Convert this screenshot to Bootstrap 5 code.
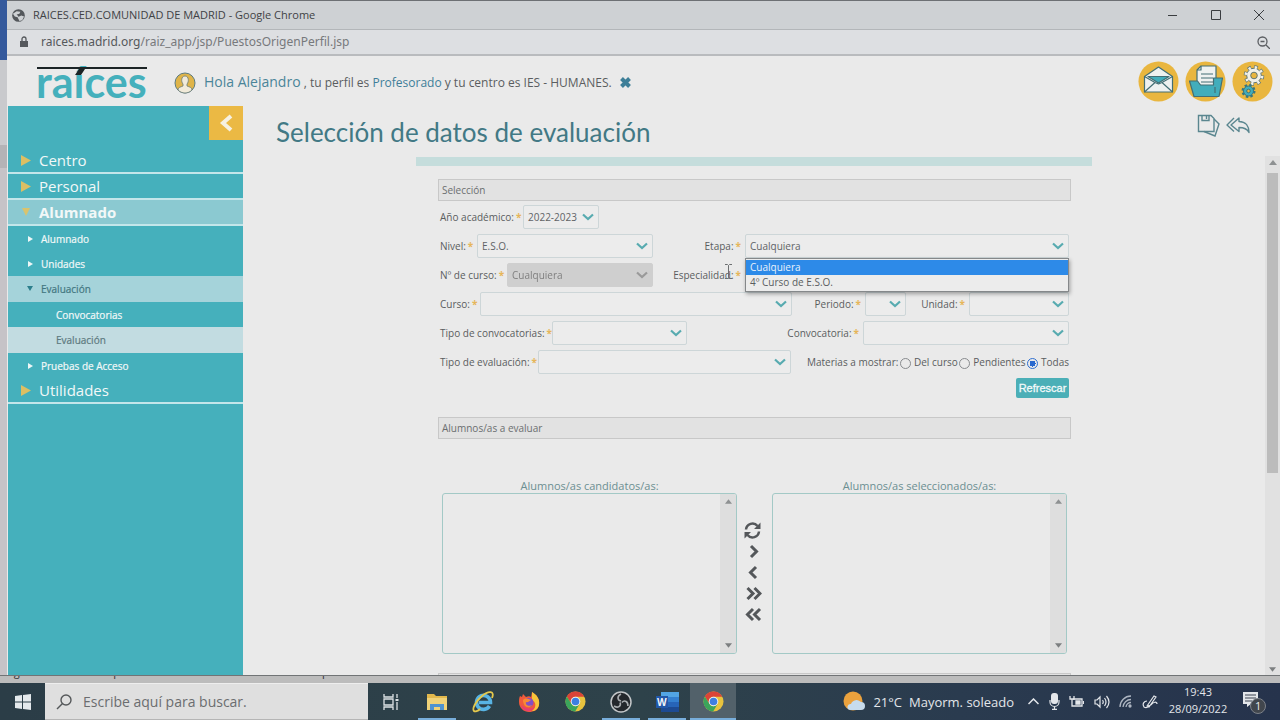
<!DOCTYPE html>
<html lang="es">
<head>
<meta charset="utf-8">
<meta name="viewport" content="width=device-width, initial-scale=1">
<title>RAICES.CED.COMUNIDAD DE MADRID</title>
<link rel="stylesheet" href="https://cdn.jsdelivr.net/npm/bootstrap@5.3.0/dist/css/bootstrap.min.css">
<style>
:root{--teal:#45b0bc;--amber:#ebb944;--ink:#5a5d60}
body{font-family:"Open Sans","Noto Sans",sans-serif;font-size:11px;line-height:16px;color:var(--ink);background:#c3c4c6;overflow:hidden}
svg{display:block;flex:none}
a{text-decoration:none}
.fit-h{min-height:0}
.fit-w{min-width:0}
.behind{width:7px;background:linear-gradient(#34599c 60px,#c9cacd 60px 145px,#b4b3b6 145px 168px,#c6c3c7 168px)}
.win{border-top:1px solid #6d7074;background:#eaeaea;min-width:0}
.win-title{height:29px;background:#ced1d4;border-bottom:1px solid #b3b6b9;padding:0 16px 0 5px;font-size:11px;color:#3f4245}
.win-url{height:26px;background:#dddfe2;border-bottom:2px solid #b9bbbe;padding:0 10px 0 12px;font:12px/16px "Noto Sans",sans-serif;color:#77797c}
.win-url b{font-weight:400;color:#55585b}
.win-btn{border:0;background:none;padding:0}
.win-btns{gap:33px}
.top{height:50px;padding:0 7px 0 29px}
.logo{font:700 43px/46px Lato,sans-serif;color:var(--teal);width:112px;margin-top:2px}
.logo svg{top:8px;left:1px}
.user-icon{margin-left:26px}
.tools{gap:6px}
.hello{font-size:12px;color:var(--ink);padding-top:2px}
.hello a{color:#3e7e99}
.hello .who{font-size:14px;color:#4a8599}
.side{width:235px;margin-left:1px;background:var(--teal)}
.fold{width:34px;height:34px;background:var(--amber);border:0;padding:0}
.menu{margin-top:8px}
.menu a{display:flex;align-items:center;color:#f2f8f8}
.m1{height:26px;font-size:15px;border-bottom:2px solid #c3e6ea;padding-left:13px;gap:8px}
.m1.open{background:#8bc9d1;font-weight:700}
.m2,.m3{height:25px;font-size:10px;-webkit-text-stroke:.2px}
.m2{padding-left:17px;gap:8px}
.m3{padding-left:48px}
.m2.open,.m3.open{height:26px}
.menu .m2.open{background:#a5d3da;color:#42767f}
.menu .m3.open{background:#c2dce1;color:#5d7a80}
.head-row{height:50px;padding:6px 30px 0 33px}
.head-row h1{font:400 26px/40px Lato,sans-serif;color:#427985}
.acts{gap:6px;padding-top:2px}
.panel{width:676px;max-width:100%;padding:13px 21px 0 22px}
.stripe{width:676px;max-width:100%;height:9px;margin-top:1px;background:#c5dddc}
.sec{height:22px;margin:0;background:#e2e2e2;border:1px solid #c8c8c8;font-size:10px;line-height:20px;font-weight:400;padding:0 3px;color:#6b6e70}
.frow{display:grid;align-items:center;height:29px;margin:0 2px}
.r1{grid-template-columns:83px 76px;margin-top:1px}
.r2{grid-template-columns:37px 176fr 92px 324fr}
.r3{grid-template-columns:67px 146fr 92px 324fr}
.r4{grid-template-columns:40px 312fr 73px 41fr 63px 100fr}
.r5{grid-template-columns:112px 135fr 176px 206fr}
.r6{grid-template-columns:98px 253fr 278fr}
.frow label,.frow .lbl{font-size:10px;white-space:nowrap}
.req::after{content:"*";color:#e6b65a;font-weight:700;margin-left:2px}
.end{text-align:right;padding-right:4px}
.pick{appearance:none;width:100%;height:24px;border:1px solid #cdd6d8;border-radius:2px;padding:0 18px 0 4px;font-size:10px;line-height:20px;color:#606366;background:#ececec url("data:image/svg+xml,%3Csvg xmlns='http://www.w3.org/2000/svg' viewBox='0 0 12 8'%3E%3Cpath d='M1 1.500l5 4.500 5-4.500' fill='none' stroke='%2358abb0' stroke-width='2.200'/%3E%3C/svg%3E") no-repeat right 4px center/12px 8px}
.pick:disabled{background-color:#cfcfcf;border-color:#cfcfcf;color:#7d8082;opacity:1;filter:grayscale(1)}
.pop{top:24px;left:0;right:0;z-index:5;background:#ececec;border:1px solid #85888a;box-shadow:1px 2px 4px #0005;font-size:10px;line-height:15px;padding:1px 0}
.pop div{padding:0 4px}
.pop .on{background:#2d8ae8;color:#e9f2fb}
.rad{gap:3px}
.rad input{appearance:none;width:11px;height:11px;border:1px solid #888b8e;border-radius:50%;margin:4px 0 0}
.rad input:checked{border-color:#2f6fd0;background:radial-gradient(#2868cf 3px,#eaeaea 3px)}
.go-row{height:41px;padding:2px 2px 0 0}
.go{width:53px;height:20px;border:0;border-radius:2px;background:#4bafb7;color:#f3fafa;font:400 11px/18px "Liberation Sans",sans-serif;padding:0;-webkit-text-stroke:.3px}
.lists{margin:39px 4px 0 4px}
.half{flex:1 1 0;min-width:0}
.lists label{font-size:11px;line-height:15px;color:#6c8f92}
.box{height:161px;border:1px solid #a3c9c6;border-radius:3px;overflow:hidden}
.box select{flex:1;min-width:0;border:0;background:none;overflow:hidden;outline:0}
.sb{width:16px;background:#dedede;padding:5px 0}
.moves{width:35px;padding:42px 0 0 7px}
.moves button{border:0;background:none;padding:0;height:21px}
.next{margin-top:19px}
.bar-page{width:15px;background:#e1e1e1;padding:4px 0 3px}
.thumb{width:11px;height:300px;background:#bcbcbc}
.status{height:8px;background:#bcbcbc;border-top:1px solid #717476;overflow:hidden;color:#2f3133;padding-left:1px;gap:22px}
.status span{line-height:16px;margin-top:-12px}
.task{height:37px;background:linear-gradient(90deg,#2b3d47,#2e424a 50%,#2a3b4f 75%,#26334c);color:#e3e6ea}
.task button{border:0;background:none;padding:0;width:46px;height:37px;display:flex;align-items:center;justify-content:center}
.task .run{background:linear-gradient(#78aedb,#78aedb) no-repeat bottom center/38px 2px}
.task .act{background-color:#52616a;background-size:46px 2px}
.task .start{width:45px}
.task .notif{width:46px;padding-right:6px;margin-left:6px}
.find{width:323px;background:#dfdfdf;border-top:1px solid #eee;border-bottom:1px solid #b5b5b5;padding-left:11px;gap:11px}
.find input{border:0;background:none;font-size:14px;width:240px;padding:0;outline:0;color:#666}
.find input::placeholder{color:#6b6d6f;opacity:1}
.weather{font-size:13px;gap:7px}
.tray{width:130px;margin-left:14px}
.clock{font-size:11px;line-height:17px;width:60px;margin-left:10px}
.ibeam{left:308px;top:98px;z-index:4}
</style>
</head>
<body class="vh-100 d-flex flex-column">
<svg width="0" height="0" class="position-absolute"><defs>
<symbol id="chrome" viewBox="0 0 22 22"><circle cx="11" cy="11" r="10.500" fill="#e8c33e"/><path d="M1.900 5.700A10.500 10.500 0 0 1 20.200 6H11a5 5 0 0 0-4.600 7z" fill="#db4437"/><path d="M1.900 5.700A10.500 10.500 0 0 0 10.600 21.500L15.300 13.600A5 5 0 0 1 6.500 13z" fill="#3ba55b"/><circle cx="11" cy="11" r="5" fill="#eef2f5"/><circle cx="11" cy="11" r="4" fill="#3d7fe0"/></symbol>
<symbol id="up" viewBox="0 0 8 5"><path d="M0 5l4-5 4 5z" fill="#8e9192"/></symbol>
<symbol id="dn" viewBox="0 0 8 5"><path d="M0 0l4 5 4-5z" fill="#7c7f80"/></symbol>
<symbol id="tri" viewBox="0 0 10 11"><path d="M0 0l10 5.500L0 11z" fill="#dcbf63"/></symbol>
</defs></svg>

<div class="d-flex flex-grow-1 fit-h">
<div class="behind flex-shrink-0"></div>
<div class="win d-flex flex-column flex-grow-1">
  <div class="win-title d-flex align-items-center flex-shrink-0">
    <svg width="13" height="13" viewBox="0 0 14 14"><circle cx="7" cy="7" r="6.800" fill="#53575b"/><path d="M1 5l4-2.500 4 .5-1 2-3 1 2 2-1 1-3-1zM6 9l4-2 3 1-2 4-3 1z" fill="#ced1d4"/></svg>
    <span class="ms-2">RAICES.CED.COMUNIDAD DE MADRID - Google Chrome</span>
    <div class="ms-auto d-flex win-btns">
      <button class="win-btn" aria-label="Minimizar"><svg width="10" height="10"><path d="M0 5.500h9" stroke="#3a3d40"/></svg></button>
      <button class="win-btn" aria-label="Maximizar"><svg width="10" height="10"><path d="M.5.500h9v9h-9z" fill="none" stroke="#3a3d40"/></svg></button>
      <button class="win-btn" aria-label="Cerrar"><svg width="10" height="10"><path d="M0 0l10 10M10 0L0 10" stroke="#3a3d40"/></svg></button>
    </div>
  </div>
  <div class="win-url d-flex align-items-center flex-shrink-0">
    <svg width="10" height="12" viewBox="0 0 10 12"><path d="M1 5h8v6H1z" fill="#55585c"/><path d="M3 5V3a2 2 0 0 1 4 0v2" fill="none" stroke="#55585c" stroke-width="1.300"/></svg>
    <span class="ms-2 ps-1"><b>raices.madrid.org</b>/raiz_app/jsp/PuestosOrigenPerfil.jsp</span>
    <svg class="ms-auto" width="13" height="13" viewBox="0 0 13 13" fill="none" stroke="#5b5e62" stroke-width="1.300"><circle cx="5.500" cy="5.500" r="4.500"/><path d="M9 9l4 4M3.500 5.500h4"/></svg>
  </div>

  <header class="top d-flex align-items-center flex-shrink-0">
    <div class="logo position-relative">raíces<svg class="position-absolute" width="111" height="16" viewBox="0 0 111 16"><path d="M0 0h110v2H48l-4 6h-6l4-6H0z" fill="#1c2426"/></svg></div>
    <svg class="user-icon mt-1" width="22" height="22" viewBox="0 0 22 22"><circle cx="11" cy="11" r="10" fill="#dfb449" stroke="#5c7b80"/><path d="M4 18c0-3 3-3 5-4v-2C7 10 7 4 11 4s4 6 2 8v2c2 1 5 1 5 4-4 4-10 4-14 0z" fill="#f1ead9" stroke="#6b7c78" stroke-width=".8"/></svg>
    <div class="hello ms-2 d-flex align-items-center"><span><a href="#" class="who">Hola Alejandro</a> , tu perfil es <a href="#">Profesorado</a> y tu centro es IES - HUMANES.</span>
    <a href="#" class="ms-2" aria-label="Salir"><svg width="11" height="11" viewBox="0 0 11 11"><path d="M1.500 1.500l8 8M9.500 1.500l-8 8" stroke="#3e7f98" stroke-width="4"/></svg></a></div>
    <div class="ms-auto d-flex tools">
      <svg width="41" height="41" viewBox="0 0 41 41"><circle cx="20.500" cy="20.500" r="20" fill="#e9b63f"/><g stroke="#436f75" stroke-width="1.200" stroke-linejoin="round"><path d="M6.500 15.500L20.500 6l14 9.500V31h-28z" fill="#eef1f0"/><path d="M10 15.500h21L20.500 22z" fill="#42adbb"/><path d="M6.500 15.500L17 21.500l3.500 1.500 3.500-1.500 10.500-6M6.500 31L17 21.500M34.500 31L24 21.500" fill="none"/></g></svg>
      <svg width="41" height="41" viewBox="0 0 41 41"><circle cx="20.500" cy="20.500" r="20" fill="#e9b63f"/><g stroke="#436f75" stroke-width="1.200" stroke-linejoin="round"><path d="M16 5h15v25H12V9z" fill="#eef1f0"/><path d="M16 5v4h-4M16 13h12M16 17h12M16 21h12" fill="none"/><path d="M4.500 20h8l3 4h13v-7h9L34 35.500H9z" fill="#42adbb"/><path d="M30 26v6" fill="none"/></g></svg>
      <svg width="41" height="41" viewBox="0 0 41 41"><circle cx="20.500" cy="20.500" r="20" fill="#e9b63f"/><circle cx="22" cy="14.500" r="8" fill="none" stroke="#5f7777" stroke-width="4.500" stroke-dasharray="3.280 3"/><circle cx="22" cy="14.500" r="7.300" fill="#f1f0e8" stroke="#5f7777"/><circle cx="22" cy="14.500" r="8" fill="none" stroke="#f1f0e8" stroke-width="3" stroke-dasharray="2.280 4" stroke-dashoffset="-.5"/><circle cx="22" cy="14.500" r="3.300" fill="#e9b63f" stroke="#5f7777"/><circle cx="16.500" cy="30" r="5.500" fill="none" stroke="#37767e" stroke-width="3" stroke-dasharray="2.300 2.020"/><circle cx="16.500" cy="30" r="5" fill="#42adbb" stroke="#37767e"/><circle cx="16.500" cy="30" r="1.800" fill="#e9b63f" stroke="#37767e"/></svg>
    </div>
  </header>

  <div class="d-flex flex-grow-1 fit-h">
    <aside class="side flex-shrink-0">
      <div class="d-flex justify-content-end"><button class="fold d-flex align-items-center justify-content-center" aria-label="Plegar menú"><svg width="14" height="18" viewBox="0 0 14 18"><path d="M12 2L4 9l8 7" fill="none" stroke="#f6f1e2" stroke-width="4"/></svg></button></div>
      <nav class="menu">
        <a href="#" class="m1"><svg width="10" height="11"><use href="#tri"/></svg>Centro</a>
        <a href="#" class="m1"><svg width="10" height="11"><use href="#tri"/></svg>Personal</a>
        <a href="#" class="m1 open"><svg width="10" height="11" viewBox="0 0 10 11"><path d="M1 1h8l-4 8z" fill="#d9c36e"/></svg>Alumnado</a>
        <a href="#" class="m2"><svg width="8" height="6"><path d="M3 0l5 3-5 3z" fill="#eef7f7"/></svg>Alumnado</a>
        <a href="#" class="m2"><svg width="8" height="6"><path d="M3 0l5 3-5 3z" fill="#eef7f7"/></svg>Unidades</a>
        <a href="#" class="m2 open"><svg width="8" height="6"><path d="M2 0h6L5 5z" fill="#2c7f8c"/></svg>Evaluación</a>
        <a href="#" class="m3">Convocatorias</a>
        <a href="#" class="m3 open">Evaluación</a>
        <a href="#" class="m2"><svg width="8" height="6"><path d="M3 0l5 3-5 3z" fill="#eef7f7"/></svg>Pruebas de Acceso</a>
        <a href="#" class="m1"><svg width="10" height="11"><use href="#tri"/></svg>Utilidades</a>
      </nav>
    </aside>

    <main class="flex-grow-1 d-flex flex-column fit-w">
      <div class="head-row d-flex flex-shrink-0">
        <h1 class="m-0">Selección de datos de evaluación</h1>
        <div class="ms-auto d-flex acts">
          <a href="#" aria-label="Guardar"><svg width="23" height="23" viewBox="0 0 23 23" fill="none" stroke="#5a868f" stroke-width="1.400"><path d="M1.500 1.500H14l3 3v13H1.500z"/><path d="M5 1.500v5h7v-5M9.500 2v3M17 5l5 5-4 12-11-4.500"/></svg></a>
          <a href="#" aria-label="Volver"><svg width="24" height="23" viewBox="0 0 24 23" fill="none" stroke="#5a868f" stroke-width="1.400" stroke-linejoin="round"><path d="M8 4L1 11l7 6.500M13 4l-8 7 8 6.500v-4c5 0 8 1 10 5 0-6-3-11-10-11z"/></svg></a>
        </div>
      </div>
      <div class="d-flex flex-grow-1 fit-h">
        <div class="flex-grow-1 overflow-hidden">
          <div class="stripe mx-auto"></div>
          <form class="panel mx-auto position-relative">
            <h2 class="sec">Selección</h2>
            <div class="frow r1"><label class="req" for="ano">Año académico:</label><select id="ano" class="pick"><option>2022-2023</option></select></div>
            <div class="frow r2">
              <label class="req" for="niv">Nivel:</label><select id="niv" class="pick"><option>E.S.O.</option></select>
              <label class="req end" for="eta">Etapa:</label>
              <div class="position-relative"><select id="eta" class="pick d-block"><option>Cualquiera</option><option>4º Curso de E.S.O.</option></select>
                <div class="pop position-absolute"><div class="on">Cualquiera</div><div>4º Curso de E.S.O.</div></div></div>
            </div>
            <div class="frow r3">
              <label class="req" for="num">Nº de curso:</label><select id="num" class="pick" disabled><option>Cualquiera</option></select>
              <label class="req end" for="esp">Especialidad:</label><select id="esp" class="pick"><option></option></select>
            </div>
            <div class="frow r4">
              <label class="req" for="cur">Curso:</label><select id="cur" class="pick"><option></option></select>
              <label class="req end" for="per">Periodo:</label><select id="per" class="pick"><option></option></select>
              <label class="req end" for="uni">Unidad:</label><select id="uni" class="pick"><option></option></select>
            </div>
            <div class="frow r5">
              <label class="req" for="tco">Tipo de convocatorias:</label><select id="tco" class="pick"><option></option></select>
              <label class="req end" for="con">Convocatoria:</label><select id="con" class="pick"><option></option></select>
            </div>
            <div class="frow r6">
              <label class="req" for="tev">Tipo de evaluación:</label><select id="tev" class="pick"><option></option></select>
              <div class="d-flex justify-content-between ps-3"><span class="lbl">Materias a mostrar:</span>
                <label class="rad d-flex"><input type="radio" name="mat">Del curso</label>
                <label class="rad d-flex"><input type="radio" name="mat">Pendientes</label>
                <label class="rad d-flex"><input type="radio" name="mat" checked>Todas</label></div>
            </div>
            <div class="go-row d-flex justify-content-end"><button type="button" class="go">Refrescar</button></div>
            <h2 class="sec">Alumnos/as a evaluar</h2>
            <div class="lists d-flex">
              <div class="half text-center"><label class="d-block" for="cand">Alumnos/as candidatos/as:</label>
                <div class="box d-flex"><select id="cand" multiple></select><div class="sb d-flex flex-column justify-content-between align-items-center"><svg width="7" height="5"><use href="#up"/></svg><svg width="7" height="5"><use href="#dn"/></svg></div></div></div>
              <div class="moves d-flex flex-column align-items-start">
                <button type="button" aria-label="Actualizar"><svg width="17" height="17" viewBox="0 0 17 17" fill="none" stroke="#54575a" stroke-width="2.500"><path d="M2 7.500A6.500 6.500 0 0 1 13.500 4M15 9.500A6.500 6.500 0 0 1 3.500 13"/><path d="M16.500.500v6.500H10zM.5 16.500V10H7z" fill="#54575a" stroke="none"/></svg></button>
                <button type="button" aria-label="Añadir"><svg width="18" height="15" fill="none" stroke="#54575a" stroke-width="3"><path d="M7 2l5.500 5.500L7 13"/></svg></button>
                <button type="button" aria-label="Quitar"><svg width="18" height="15" fill="none" stroke="#54575a" stroke-width="3"><path d="M12 2L6.500 7.500 12 13"/></svg></button>
                <button type="button" aria-label="Añadir todos"><svg width="18" height="15" fill="none" stroke="#54575a" stroke-width="3"><path d="M3.500 2L9 7.500 3.500 13M10.500 2L16 7.500 10.500 13"/></svg></button>
                <button type="button" aria-label="Quitar todos"><svg width="18" height="15" fill="none" stroke="#54575a" stroke-width="3"><path d="M9 2L3.500 7.500 9 13M16 2l-5.500 5.500L16 13"/></svg></button>
              </div>
              <div class="half text-center"><label class="d-block" for="sel">Alumnos/as seleccionados/as:</label>
                <div class="box d-flex"><select id="sel" multiple></select><div class="sb d-flex flex-column justify-content-between align-items-center"><svg width="7" height="5"><use href="#up"/></svg><svg width="7" height="5"><use href="#dn"/></svg></div></div></div>
            </div>
            <div class="sec next"></div>
            <svg class="ibeam position-absolute" width="9" height="15" fill="none" stroke="#6c6f71"><path d="M1 .5h2.500l1 1 1-1H8M4.500 1.500v12M1 14.500h2.500l1-1 1 1H8"/></svg>
          </form>
        </div>
        <div class="bar-page d-flex flex-column align-items-center flex-shrink-0"><svg width="8" height="5"><use href="#up"/></svg><div class="thumb mt-2"></div><svg class="mt-auto" width="7" height="5"><use href="#dn"/></svg></div>
      </div>
    </main>
  </div>
</div>
</div>

<div class="status d-flex flex-shrink-0"><span>Página 1 de 1</span><span>229 palabras</span><span>⌨</span><span>Accesibilidad: No disponible</span></div>

<footer class="task d-flex flex-shrink-0">
  <button class="start" aria-label="Inicio"><svg width="16" height="16" fill="#e4e9ec"><path d="M0 2l7-1v6.500H0zM8 1l8-1v7.500H8zM0 8.500h7V15l-7-1zM8 8.500h8V16l-8-1z"/></svg></button>
  <div class="find d-flex align-items-center"><svg width="16" height="16" fill="none" stroke="#55585a" stroke-width="1.400"><circle cx="10" cy="6" r="5"/><path d="M6.500 9.500L1 15"/></svg><input type="text" aria-label="Buscar" placeholder="Escribe aquí para buscar."></div>
  <button aria-label="Vista de tareas"><svg width="17" height="16" fill="none" stroke="#dde2e5" stroke-width="1.300"><path d="M1 0v3h9V0M1 16v-3h9v3M1 5h9v6H1zM14 0v4M14 8v8"/><path d="M12.500 5h3v2h-3z" fill="#dde2e5" stroke="none"/></svg></button>
  <button class="run" aria-label="Explorador"><svg width="22" height="18" viewBox="0 0 22 18"><path d="M1 1h7l2 2h11v14H1z" fill="#e2b84c"/><path d="M1 5h20v12H1z" fill="#f0d278"/><path d="M4 17v-6h14v6h-4v-3H8v3z" fill="#4f93cf"/></svg></button>
  <button aria-label="Internet Explorer"><svg width="23" height="22" viewBox="0 0 23 22" fill="none"><path d="M17.500 15A7 7 0 1 1 18.500 11.500H7" stroke="#58b4e4" stroke-width="3.600"/><path d="M20 7c3-7-3-8-10-2C3 11 0 18 2 20c1 1 4 0 6-2" stroke="#e4c84d" stroke-width="1.800"/></svg></button>
  <button aria-label="Firefox"><svg width="23" height="22" viewBox="0 0 23 22"><path d="M2 5l2 1 1-3 3 3c2-1 4-1 5 0l1-5c5 3 8 7 7 13-1 5-5 7-10 7S1 17 1 11c0-2 0-4 1-6z" fill="#ef5a3c"/><path d="M14 1c5 3 8 7 7 13-1 4-4 6-7 6 5-4 4-9 0-11z" fill="#f6c53a"/><path d="M3 14c2 8 12 8 14 1-2 3-8 4-14-1z" fill="#e83e72"/><circle cx="11" cy="11.500" r="4.500" fill="#8350c4"/><path d="M5 9c3-3 5-1 8 0-2 1-3 3-5 2-1 3 3 5 6 3-4 5-9 1-9-5z" fill="#f78a35"/></svg></button>
  <button aria-label="Chrome"><svg width="21" height="21"><use href="#chrome"/></svg></button>
  <button class="run" aria-label="OBS"><svg width="22" height="22" viewBox="0 0 22 22"><circle cx="11" cy="11" r="10" fill="#24282c" stroke="#c3c6c8" stroke-width="1.500"/><g fill="none" stroke="#a9adb0" stroke-width="1.600"><path d="M11 10c-4-1-4-5 0-7"/><path d="M11 10c-4-1-4-5 0-7" transform="rotate(120 11 11)"/><path d="M11 10c-4-1-4-5 0-7" transform="rotate(240 11 11)"/></g></svg></button>
  <button class="run" aria-label="Word"><svg width="23" height="20" viewBox="0 0 23 20"><path d="M5 0h18v5H5z" fill="#52a5e4"/><path d="M5 5h18v5H5z" fill="#3480d0"/><path d="M5 10h18v5H5z" fill="#2764b8"/><path d="M5 15h18v5H5z" fill="#1d4a92"/><path d="M0 4h12v12H0z" fill="#2257a8"/><text x="1" y="14" font-size="10" font-weight="700" fill="#f0f4fa" font-family="Open Sans">W</text></svg></button>
  <button class="run act" aria-label="Chrome, ventana activa"><svg width="21" height="21"><use href="#chrome"/></svg></button>
  <div class="ms-auto weather d-flex align-items-center">
    <svg width="24" height="22" viewBox="0 0 24 22"><circle cx="11" cy="10" r="9.500" fill="#eba23d"/><path d="M8 19h11a4 4 0 0 0 0-8 6 6 0 0 0-10 2 3 3 0 0 0-1 6z" fill="#c7dced"/></svg>
    <span>21°C</span><span>Mayorm. soleado</span>
  </div>
  <div class="tray d-flex align-items-center justify-content-between">
    <svg width="11" height="7" fill="none" stroke="#e3e6ea" stroke-width="1.500"><path d="M.5 6l5-5 5 5"/></svg>
    <svg width="11" height="17"><rect x="2" width="7" height="11" rx="3" fill="#e3e6ea"/><path d="M1 7v2a4.500 4.500 0 0 0 9 0V7M5.500 13v3M3 16.300h5" fill="none" stroke="#e3e6ea" stroke-width="1.200"/></svg>
    <svg width="15" height="12" fill="none" stroke="#e3e6ea" stroke-width="1.300"><path d="M4 3h9v7H3V7"/><path d="M14.500 5v3M1 0v3h4V0M3 3v4"/><path d="M7 5h4v3H7z" fill="#e3e6ea"/></svg>
    <svg width="16" height="14" fill="none" stroke="#e3e6ea" stroke-width="1.200"><path d="M1 5h2l3-3v10L3 9H1zM8.500 5q1.500 2 0 4M10.500 3q3 4 0 8M12.500 1q5 6 0 12"/></svg>
    <svg width="13" height="13" fill="none" stroke="#aeb6c2" stroke-width="1.300"><path d="M1 12A11 11 0 0 1 12 1M4 12A8 8 0 0 1 12 4.500M7 12A5 5 0 0 1 12 7.500"/><circle cx="11" cy="11" r="1" fill="#e3e6ea"/></svg>
    <svg width="16" height="14" fill="none" stroke="#e3e6ea" stroke-width="1.200"><path d="M5 11l7-10 2 1-7 10zM5 6c-3 0-5 3-3 6 3 2 5-1 5-2M9 10c2-3 6-4 6-1"/></svg>
  </div>
  <div class="clock text-center pb-1 d-flex flex-column justify-content-center"><span>19:43</span><span>28/09/2022</span></div>
  <button class="notif" aria-label="Notificaciones"><svg width="25" height="24" viewBox="0 0 25 24"><path d="M1 2h15v12H9l-4 3v-3H1z" fill="#e3e6ea"/><path d="M3 5h11M3 8h11M3 11h7" stroke="#3a4250"/><circle cx="16" cy="16" r="7.500" fill="#41464d" stroke="#7d828a"/><text x="13" y="20" font-size="11" fill="#e8eaec" font-family="Open Sans">1</text></svg></button>
</footer>
<script src="https://cdn.jsdelivr.net/npm/bootstrap@5.3.0/dist/js/bootstrap.bundle.min.js"></script>
</body>
</html>
